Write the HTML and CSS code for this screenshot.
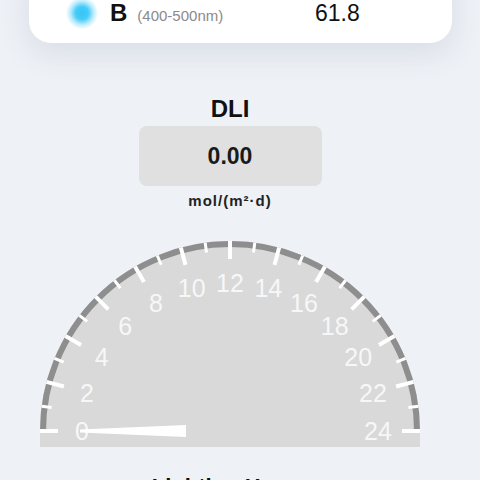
FILE: index.html
```html
<!DOCTYPE html>
<html lang="en">
<head>
    <meta charset="UTF-8">
    <meta name="viewport" content="width=device-width, initial-scale=1.0">
    <title>Light Monitor</title>
    <link rel="stylesheet" href="styles.css">
</head>
<body>
    <div class="page">
        <div class="card">
            <div class="band-row">
                <span class="dot"></span>
                <span class="band-label">
                    <span class="band-name">B</span>
                    <span class="band-range">(400-500nm)</span>
                </span>
                <span class="band-value">61.8</span>
            </div>
        </div>

        <div class="dli">
            <h2 class="dli-title">DLI</h2>
            <div class="dli-box"><span class="dli-value">0.00</span></div>
            <div class="dli-unit">mol/(m²·d)</div>

            <svg class="gauge" width="380" height="208" viewBox="0 0 380 208">
                <path d="M 0 191 A 190 190 0 0 1 380 191 Z" fill="#d9d9d9"/>
                <rect x="0" y="191" width="380" height="16" fill="#d9d9d9"/>
                <path d="M 3 191 A 187 187 0 0 1 377 191" fill="none" stroke="#8e8e8e" stroke-width="6"/>
                <!-- major ticks, every 2h -->
                <g class="tick-major">
                    <line x1="0" y1="191" x2="18" y2="191" transform="rotate(0 190 191)"/>
                    <line x1="0" y1="191" x2="18" y2="191" transform="rotate(15 190 191)"/>
                    <line x1="0" y1="191" x2="18" y2="191" transform="rotate(30 190 191)"/>
                    <line x1="0" y1="191" x2="18" y2="191" transform="rotate(45 190 191)"/>
                    <line x1="0" y1="191" x2="18" y2="191" transform="rotate(60 190 191)"/>
                    <line x1="0" y1="191" x2="18" y2="191" transform="rotate(75 190 191)"/>
                    <line x1="0" y1="191" x2="18" y2="191" transform="rotate(90 190 191)"/>
                    <line x1="0" y1="191" x2="18" y2="191" transform="rotate(105 190 191)"/>
                    <line x1="0" y1="191" x2="18" y2="191" transform="rotate(120 190 191)"/>
                    <line x1="0" y1="191" x2="18" y2="191" transform="rotate(135 190 191)"/>
                    <line x1="0" y1="191" x2="18" y2="191" transform="rotate(150 190 191)"/>
                    <line x1="0" y1="191" x2="18" y2="191" transform="rotate(165 190 191)"/>
                    <line x1="0" y1="191" x2="18" y2="191" transform="rotate(180 190 191)"/>
                </g>
                <!-- minor ticks, odd hours -->
                <g class="tick-minor">
                    <line x1="0" y1="191" x2="10" y2="191" transform="rotate(7.5 190 191)"/>
                    <line x1="0" y1="191" x2="10" y2="191" transform="rotate(22.5 190 191)"/>
                    <line x1="0" y1="191" x2="10" y2="191" transform="rotate(37.5 190 191)"/>
                    <line x1="0" y1="191" x2="10" y2="191" transform="rotate(52.5 190 191)"/>
                    <line x1="0" y1="191" x2="10" y2="191" transform="rotate(67.5 190 191)"/>
                    <line x1="0" y1="191" x2="10" y2="191" transform="rotate(82.5 190 191)"/>
                    <line x1="0" y1="191" x2="10" y2="191" transform="rotate(97.5 190 191)"/>
                    <line x1="0" y1="191" x2="10" y2="191" transform="rotate(112.5 190 191)"/>
                    <line x1="0" y1="191" x2="10" y2="191" transform="rotate(127.5 190 191)"/>
                    <line x1="0" y1="191" x2="10" y2="191" transform="rotate(142.5 190 191)"/>
                    <line x1="0" y1="191" x2="10" y2="191" transform="rotate(157.5 190 191)"/>
                    <line x1="0" y1="191" x2="10" y2="191" transform="rotate(172.5 190 191)"/>
                </g>
                <g class="gauge-labels">
                    <text x="42" y="191">0</text>
                    <text x="47" y="152.7">2</text>
                    <text x="61.8" y="117">4</text>
                    <text x="85.3" y="86.3">6</text>
                    <text x="116" y="62.8">8</text>
                    <text x="151.7" y="48">10</text>
                    <text x="190" y="43">12</text>
                    <text x="228.3" y="48">14</text>
                    <text x="264" y="62.8">16</text>
                    <text x="294.7" y="86.3">18</text>
                    <text x="318.2" y="117">20</text>
                    <text x="333" y="152.7">22</text>
                    <text x="338" y="191">24</text>
                </g>
                <polygon class="needle" points="40,189.5 146,185 146,197 40,192.5"/>
            </svg>

            <h2 class="section-title">Lighting Hours</h2>
        </div>
    </div>
</body>
</html>
```

FILE: styles.css
```css
* {
    margin: 0;
    padding: 0;
    box-sizing: border-box;
    font-family: "Liberation Sans", Arial, sans-serif;
}
html, body {
    overflow: hidden;
}
body {
    background-color: #eef1f6;
    color: #111;
}
.page {
    width: 480px;
}
.card {
    margin-top: -40px;
    margin-left: 29px;
    width: 423px;
    padding: 38px 0 15px 38px;
    background-color: #fff;
    border-radius: 22px;
    box-shadow: 0 10px 30px rgba(70, 90, 120, 0.13);
}
.band-row {
    display: flex;
    align-items: center;
    height: 30px;
}
.dot {
    width: 32px;
    height: 32px;
    margin-left: -1px;
    border-radius: 50%;
    background: radial-gradient(circle, #35c4f7 0, #45cbf8 28%, rgba(90, 210, 250, 0.4) 52%, rgba(120, 220, 250, 0) 72%);
}
.band-label {
    display: flex;
    align-items: baseline;
    width: 205px;
    margin-left: 12px;
}
.band-name {
    font-size: 24px;
    font-weight: bold;
    color: #111;
}
.band-range {
    margin-left: 10px;
    font-size: 15px;
    color: #8a8a8a;
}
.band-value {
    font-size: 23px;
    color: #111;
}
.dli {
    width: 460px;
    margin-top: 52px;
    display: flex;
    flex-direction: column;
    align-items: center;
}
.dli-title {
    font-size: 24px;
    line-height: 28px;
    font-weight: bold;
    color: #111;
}
.dli-box {
    width: 183px;
    height: 60px;
    margin-top: 3px;
    background-color: #e0e0e0;
    border-radius: 8px;
    display: flex;
    justify-content: center;
    align-items: center;
}
.dli-value {
    font-size: 23px;
    font-weight: bold;
    color: #1a1a1a;
}
.dli-unit {
    margin-top: 6px;
    font-size: 15px;
    line-height: 18px;
    font-weight: bold;
    letter-spacing: 1px;
    color: #222;
}
.gauge {
    display: block;
    margin-top: 30px;
}
.tick-major line {
    stroke: #fff;
    stroke-width: 4;
}
.tick-minor line {
    stroke: #fff;
    stroke-width: 3;
}
.gauge-labels text {
    fill: #f7f7f7;
    font-size: 25px;
    text-anchor: middle;
    dominant-baseline: central;
}
.needle {
    fill: #fff;
}
.section-title {
    margin-top: 26px;
    font-size: 22px;
    line-height: 26px;
    font-weight: bold;
    color: #111;
}
```
